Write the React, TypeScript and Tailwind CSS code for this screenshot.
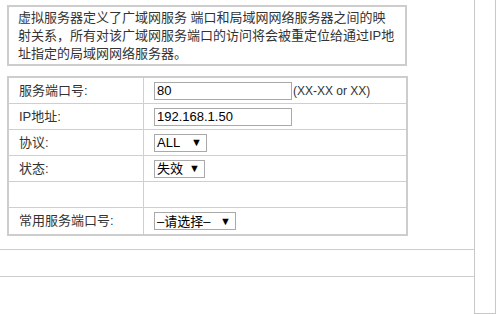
import React from 'react';

const FONT = 'font-["Liberation_Sans","Noto_Sans_CJK_SC",sans-serif]';

const Row: React.FC<{ label: string; children?: React.ReactNode; last?: boolean }> = ({ label, children, last }) => (
  <div className={`flex h-[26px] ${last ? '' : 'border-b border-[#cfcfcf]'}`}>
    <div className="w-[135px] shrink-0 border-r border-[#cfcfcf] flex items-center pl-[10px] text-[13px] text-[#333]">
      {label}
    </div>
    <div className="flex items-center pl-[10px] text-[13px]">{children}</div>
  </div>
);

const FakeSelect: React.FC<{ value: string; width: string }> = ({ value, width }) => (
  <div className={`${width} h-[18px] border border-[#a9a9a9] bg-white flex items-center justify-between pl-[2px] pr-[4px] text-[13px] text-black`}>
    <span className="leading-none">{value}</span>
    <span className="text-[11px] leading-none">▼</span>
  </div>
);

export default function App() {
  return (
    <div className={`${FONT} w-[496px] h-[314px] bg-white flex overflow-hidden`}>
      <div className="w-[474px] shrink-0 pt-[5px]">
        <div className="ml-[7px] w-[400px] border-2 border-[#cdcdcd] pl-[9px] pr-2 pt-[2px] pb-[1px] text-[13px] leading-[18px] text-[#333]">
          虚拟服务器定义了广域网服务 端口和局域网网络服务器之间的映射关系，所有对该广域网服务端口的访问将会被重定位给通过IP地址指定的局域网网络服务器。
        </div>

        <div className="ml-[7px] mt-[10px] w-[401px] border-2 border-[#cdcdcd]">
          <Row label="服务端口号:">
            <div className="w-[138px] h-[18px] border border-[#a9a9a9] flex items-center pl-[2px] text-black">80</div>
            <span className="text-[#333] text-[12px] ml-px">(XX-XX or XX)</span>
          </Row>
          <Row label="IP地址:">
            <div className="w-[138px] h-[18px] border border-[#a9a9a9] flex items-center pl-[2px] text-black">192.168.1.50</div>
          </Row>
          <Row label="协议:">
            <FakeSelect value="ALL" width="w-[53px]" />
          </Row>
          <Row label="状态:">
            <FakeSelect value="失效" width="w-[51px]" />
          </Row>
          <Row label="" />
          <Row label="常用服务端口号:" last>
            <FakeSelect value="–请选择–" width="w-[82px]" />
          </Row>
        </div>

        <div className="mt-[13px] h-[28px] border-y border-[#cdcdcd]" />
      </div>
      <div className="w-[22px] h-[314px] border-l border-r border-b border-[#c8c8c8]" />
    </div>
  );
}
